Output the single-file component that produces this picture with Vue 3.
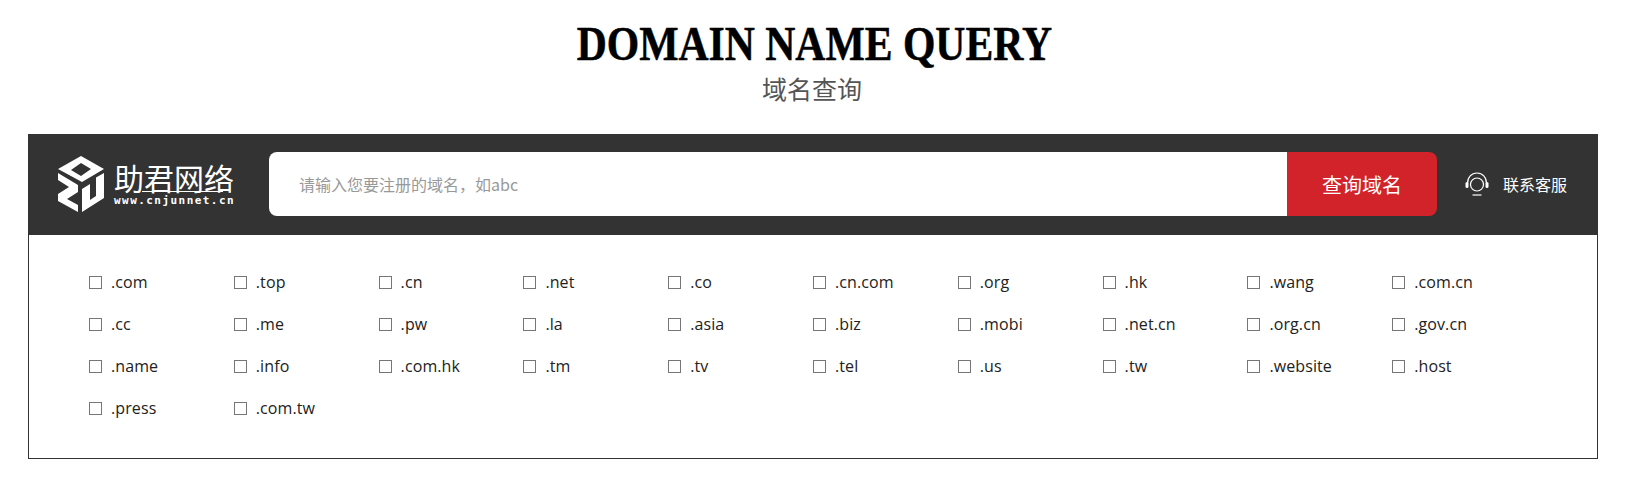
<template>
  <div class="page">
    <div class="heading">
      <h2 class="title">DOMAIN NAME QUERY</h2>
      <p class="subtitle">域名查询</p>
    </div>

    <div class="query-box">
      <div class="query-bar">
        <a class="logo" href="#">
          <svg class="logo-mark" width="46" height="56" viewBox="0 0 46 56">
            <path fill="#fff" fill-rule="evenodd" d="M23 0 46 13 24 26 0 13ZM23 7 13 14 23 20 33 13Z" />
            <path fill="#fff" d="M0 17 20 29V36L9 43 20 49V56L0 45V38L11 31 0 24Z" />
            <path fill="#fff" d="M46 17V42L24 56V33L32 28V44L38 40V21.500Z" />
          </svg>
          <div class="logo-text">
            <div class="logo-cn">助君网络</div>
            <div class="logo-en">www.cnjunnet.cn</div>
          </div>
        </a>

        <form class="search" @submit.prevent>
          <input class="search-input" type="text" placeholder="请输入您要注册的域名，如abc" v-model="keyword" />
          <button class="search-btn" type="submit">查询域名</button>
        </form>

        <a class="contact" href="#">
          <svg width="26" height="26" viewBox="0 0 26 26" fill="none" stroke="#fff" stroke-width="1.2">
            <path d="M3.5 12.5C3.5 6 7.5 2 13 2s9.500 4 9.500 10.500" />
            <circle cx="13" cy="13.500" r="6.500" />
            <rect x="1.500" y="11" width="3" height="6" rx="1.500" fill="#fff" stroke="none" />
            <rect x="21.500" y="11" width="3" height="6" rx="1.500" fill="#fff" stroke="none" />
            <path d="M8.500 24h9" />
          </svg>
          <span>联系客服</span>
        </a>
      </div>

      <ul class="suffix-list">
        <li v-for="s in suffixes" :key="s" class="suffix">
          <label>
            <input type="checkbox" class="suffix-check" />
            <span>{{ s }}</span>
          </label>
        </li>
      </ul>
    </div>
  </div>
</template>

<script setup>
import { ref } from 'vue'

const keyword = ref('')

const suffixes = [
  '.com', '.top', '.cn', '.net', '.co', '.cn.com', '.org', '.hk', '.wang', '.com.cn',
  '.cc', '.me', '.pw', '.la', '.asia', '.biz', '.mobi', '.net.cn', '.org.cn', '.gov.cn',
  '.name', '.info', '.com.hk', '.tm', '.tv', '.tel', '.us', '.tw', '.website', '.host',
  '.press', '.com.tw',
]
</script>

<style>
html, body { background: #fff; }
</style>

<style scoped>
.page {
  height: 494px;
  box-sizing: border-box;
  padding: 0 27px 0 28px;
  font-family: "Open Sans", "Noto Sans CJK SC", sans-serif;
  overflow: hidden;
}

.heading { text-align: center; height: 134px; padding-top: 17px; box-sizing: border-box; }
.title {
  margin: 0;
  padding-left: 3px;
  font: bold 48px/54px "Liberation Serif", serif;
  color: #000;
  -webkit-text-stroke: 0.5px #000;
  transform: scaleX(0.868);
}
.subtitle {
  margin: 0;
  padding-right: 2px;
  font: 25px/34px "Noto Sans CJK SC", sans-serif;
  color: #555;
}

.query-box {
  border: 1px solid #333;
  border-top: 0;
  height: 325px;
  box-sizing: border-box;
}

.query-bar {
  height: 101px;
  padding-bottom: 1px;
  box-sizing: border-box;
  margin: 0 -1px;
  background: #333;
  display: flex;
  align-items: center;
  color: #fff;
}

.logo {
  width: 241px;
  box-sizing: border-box;
  padding-left: 30px;
  display: flex;
  align-items: center;
  gap: 10px;
  color: #fff;
  text-decoration: none;
}
.logo-mark { flex-shrink: 0; }
.logo-cn {
  position: relative;
  font: 400 30px/32px "Noto Sans CJK SC", sans-serif;
  white-space: nowrap;
}
/* line under the logotype, runs from 君 to 络 */
.logo-cn::after {
  content: "";
  position: absolute;
  left: 28px;
  right: 12px;
  bottom: 1px;
  height: 1px;
  background: #fff;
}
.logo-en {
  margin-top: 1px;
  font: bold 11px/14px "DejaVu Sans Mono", monospace;
  letter-spacing: 1.450px;
  white-space: nowrap;
}

.search { display: flex; width: 1168px; height: 64px; }
.search-input {
  flex: 1;
  min-width: 0;
  border: 0;
  outline: 0;
  padding: 0 30px 1px;
  background: #fff;
  border-radius: 8px 0 0 8px;
  font: 16px "Noto Sans CJK SC", sans-serif;
  color: #333;
}
.search-input::placeholder { color: #999; opacity: 1; }
.search-btn {
  width: 150px;
  border: 0;
  background: #d2232a;
  color: #fff;
  border-radius: 0 8px 8px 0;
  font: 20px "Noto Sans CJK SC", sans-serif;
  cursor: pointer;
}

.contact {
  display: flex;
  align-items: center;
  gap: 13px;
  margin-left: 27px;
  color: #fff;
  font: 16px "Noto Sans CJK SC", sans-serif;
  text-decoration: none;
  white-space: nowrap;
}

.suffix-list {
  list-style: none;
  margin: 0;
  padding: 26px 60px 0;
  display: grid;
  grid-template-columns: repeat(10, 1fr);
  grid-auto-rows: 42px;
}
.suffix label {
  display: flex;
  align-items: center;
  height: 42px;
  font-size: 16px;
  letter-spacing: 0.1px;
  color: #222;
}
.suffix-check {
  appearance: none;
  width: 13px;
  height: 13px;
  margin: 0 9px 0 0;
  border: 1px solid #767676;
  background: #fff;
  box-sizing: border-box;
  flex-shrink: 0;
}
.suffix-check:checked { background: #d2232a; border-color: #d2232a; }
</style>
